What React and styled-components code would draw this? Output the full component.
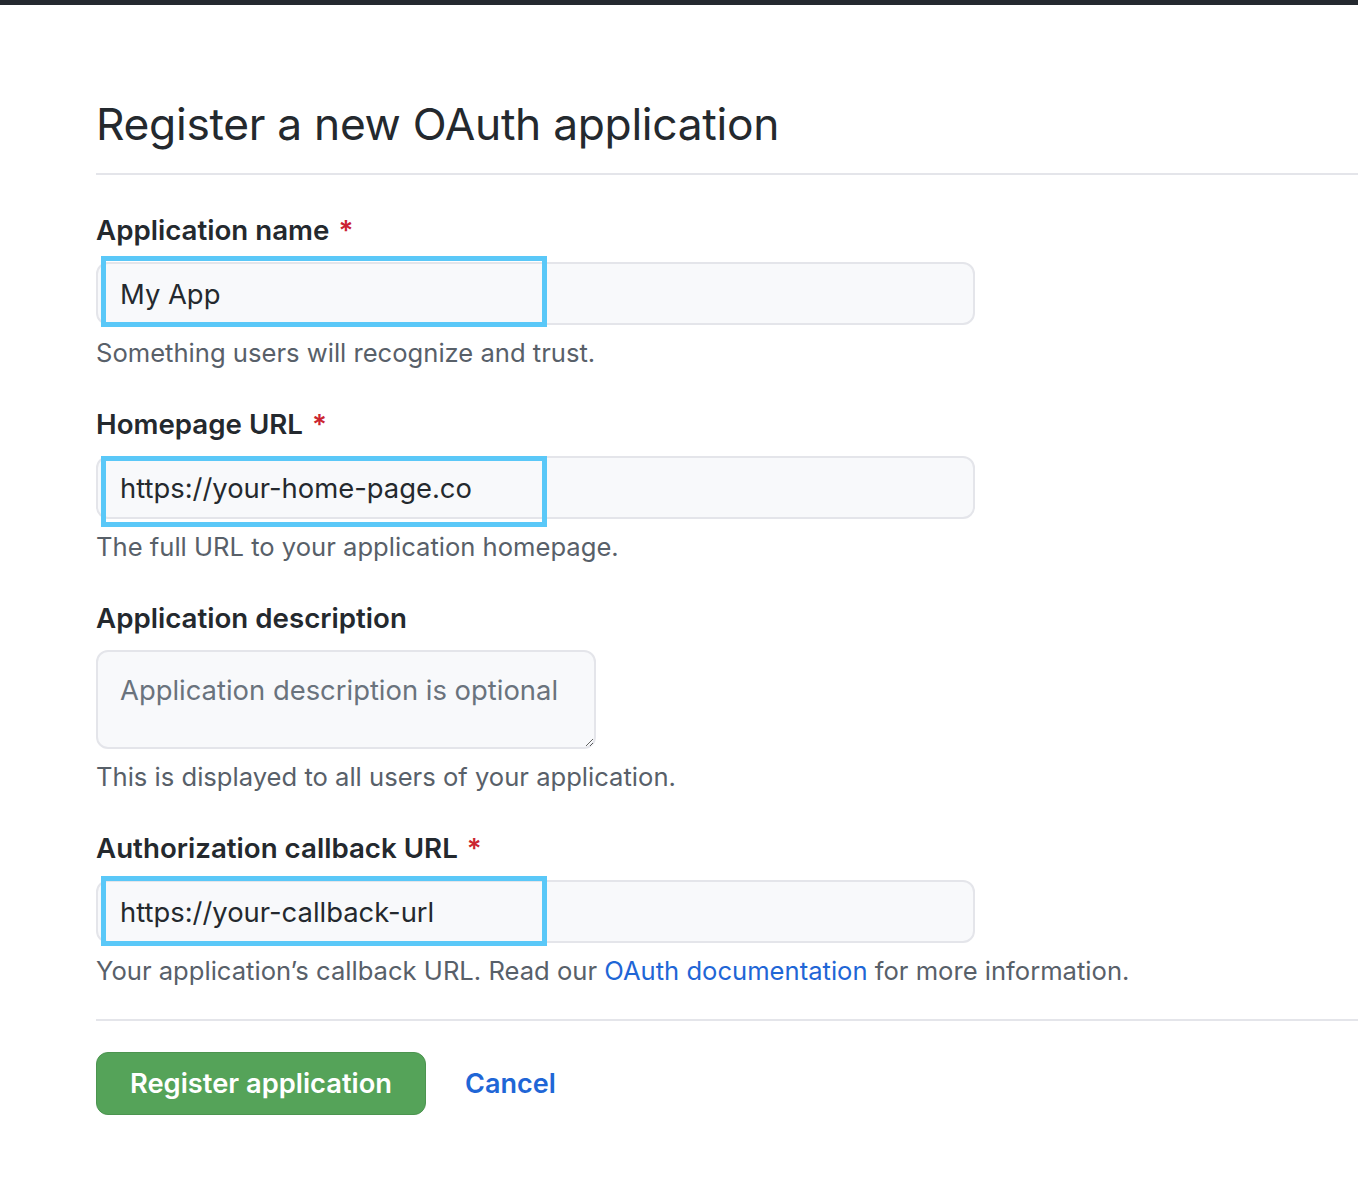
import styled, { createGlobalStyle } from "styled-components";

const GlobalStyle = createGlobalStyle`
  body {
    margin: 0;
    background: #ffffff;
    font-family: Inter, "Noto Sans", "Liberation Sans", sans-serif;
    color: #24292e;
  }
`;

// 힌트에 링크가 있으면 before / link / after 로 나눠서 넣음
const fields = [
  {
    id: "name",
    label: "Application name",
    required: true,
    value: "My App",
    hint: { before: "Something users will recognize and trust." },
    mark: { top: -6, height: 71 },
  },
  {
    id: "home",
    label: "Homepage URL",
    required: true,
    value: "https://your-home-page.co",
    hint: { before: "The full URL to your application homepage." },
    mark: { top: 0, height: 71 },
  },
  {
    id: "desc",
    label: "Application description",
    multiline: true,
    placeholder: "Application description is optional",
    hint: { before: "This is displayed to all users of your application." },
  },
  {
    id: "callback",
    label: "Authorization callback URL",
    required: true,
    value: "https://your-callback-url",
    hint: {
      before: "Your application’s callback URL. Read our ",
      link: "OAuth documentation",
      after: " for more information.",
    },
    mark: { top: -4, height: 70 },
  },
];

const App = () => {
  return (
    <>
      <GlobalStyle />
      <S.TopBar />
      <S.Main>
        <S.Header>
          <S.Title>Register a new OAuth application</S.Title>
        </S.Header>
        <S.Form onSubmit={(e) => e.preventDefault()}>
          {fields.map((f) => (
            <S.Field key={f.id}>
              <S.Label htmlFor={f.id}>
                {f.label}
                {f.required && <S.Required>*</S.Required>}
              </S.Label>
              {f.multiline ? (
                <S.TextArea id={f.id} placeholder={f.placeholder} />
              ) : (
                <S.InputWrap>
                  <S.Input id={f.id} defaultValue={f.value} />
                  {/* 스크린샷 위에 그려진 파란 강조 박스 */}
                  <S.Highlight $top={f.mark.top} $height={f.mark.height} />
                </S.InputWrap>
              )}
              <S.Hint>
                {f.hint.before}
                {f.hint.link && <S.Link href="#">{f.hint.link}</S.Link>}
                {f.hint.after}
              </S.Hint>
            </S.Field>
          ))}
          <S.Footer>
            <S.SubmitButton type="submit">Register application</S.SubmitButton>
            <S.CancelLink href="#">Cancel</S.CancelLink>
          </S.Footer>
        </S.Form>
      </S.Main>
    </>
  );
};
export default App;

const TopBar = styled.div`
  height: 5px;
  background-color: #24292f;
`;

const Main = styled.main`
  padding: 0 0 60px 96px;
`;

const Header = styled.div`
  padding: 90px 0 20px;
  border-bottom: 2px solid #e4e5ea;
`;

const Title = styled.h1`
  margin: 0;
  font-size: 44.3px;
  line-height: 58px;
  font-weight: 400;
  color: #24292e;
  letter-spacing: -0.3px;
`;

const Form = styled.form`
  display: flex;
  flex-direction: column;
  padding-top: 37px;
`;

const Field = styled.div`
  display: flex;
  flex-direction: column;
  margin-bottom: 35px;
`;

const Label = styled.label`
  font-size: 27.7px;
  line-height: 36px;
  font-weight: 600;
  color: #24292e;
  margin-bottom: 14px;
`;

const Required = styled.span`
  color: #cb2431;
  margin-left: 9px;
`;

const InputWrap = styled.div`
  position: relative;
  width: 879px;
`;

const Input = styled.input`
  box-sizing: border-box;
  width: 100%;
  height: 63px;
  padding: 0 22px;
  border: 2px solid #e4e5ea;
  border-radius: 12px;
  background-color: #f8f9fb;
  font-family: inherit;
  font-size: 27.4px;
  color: #24292e;
  outline: none;
`;

const Highlight = styled.div`
  position: absolute;
  left: 5px;
  top: ${({ $top }) => $top}px;
  width: 446px;
  height: ${({ $height }) => $height}px;
  box-sizing: border-box;
  border: 5px solid #5ac8f8;
  pointer-events: none;
`;

const TextArea = styled.textarea`
  box-sizing: border-box;
  width: 500px;
  height: 99px;
  padding: 20px 22px;
  border: 2px solid #e4e5ea;
  border-radius: 12px;
  background-color: #f8f9fb;
  font-family: inherit;
  font-size: 27.4px;
  line-height: 36px;
  color: #24292e;
  outline: none;
  resize: vertical;

  &::placeholder {
    color: #6a737d;
  }
`;

const Hint = styled.p`
  margin: 10px 0 0;
  font-size: 25.6px;
  line-height: 36px;
  color: #586069;
`;

const Link = styled.a`
  color: #1f66d6;
  text-decoration: none;
`;

const Footer = styled.div`
  display: flex;
  align-items: center;
  gap: 39px;
  margin-top: -5px;
  padding-top: 31px;
  border-top: 2px solid #e4e5ea;
`;

const SubmitButton = styled.button`
  height: 63px;
  padding: 0 33px;
  border: 1px solid #4c9450;
  border-radius: 12px;
  background-color: #55a359;
  color: #ffffff;
  font-family: inherit;
  font-size: 27.3px;
  font-weight: 600;
  cursor: pointer;
`;

const CancelLink = styled.a`
  color: #1f66d6;
  font-size: 27px;
  font-weight: 600;
  text-decoration: none;
`;

const S = {
  TopBar,
  Main,
  Header,
  Title,
  Form,
  Field,
  Label,
  Required,
  InputWrap,
  Input,
  Highlight,
  TextArea,
  Hint,
  Link,
  Footer,
  SubmitButton,
  CancelLink,
};
